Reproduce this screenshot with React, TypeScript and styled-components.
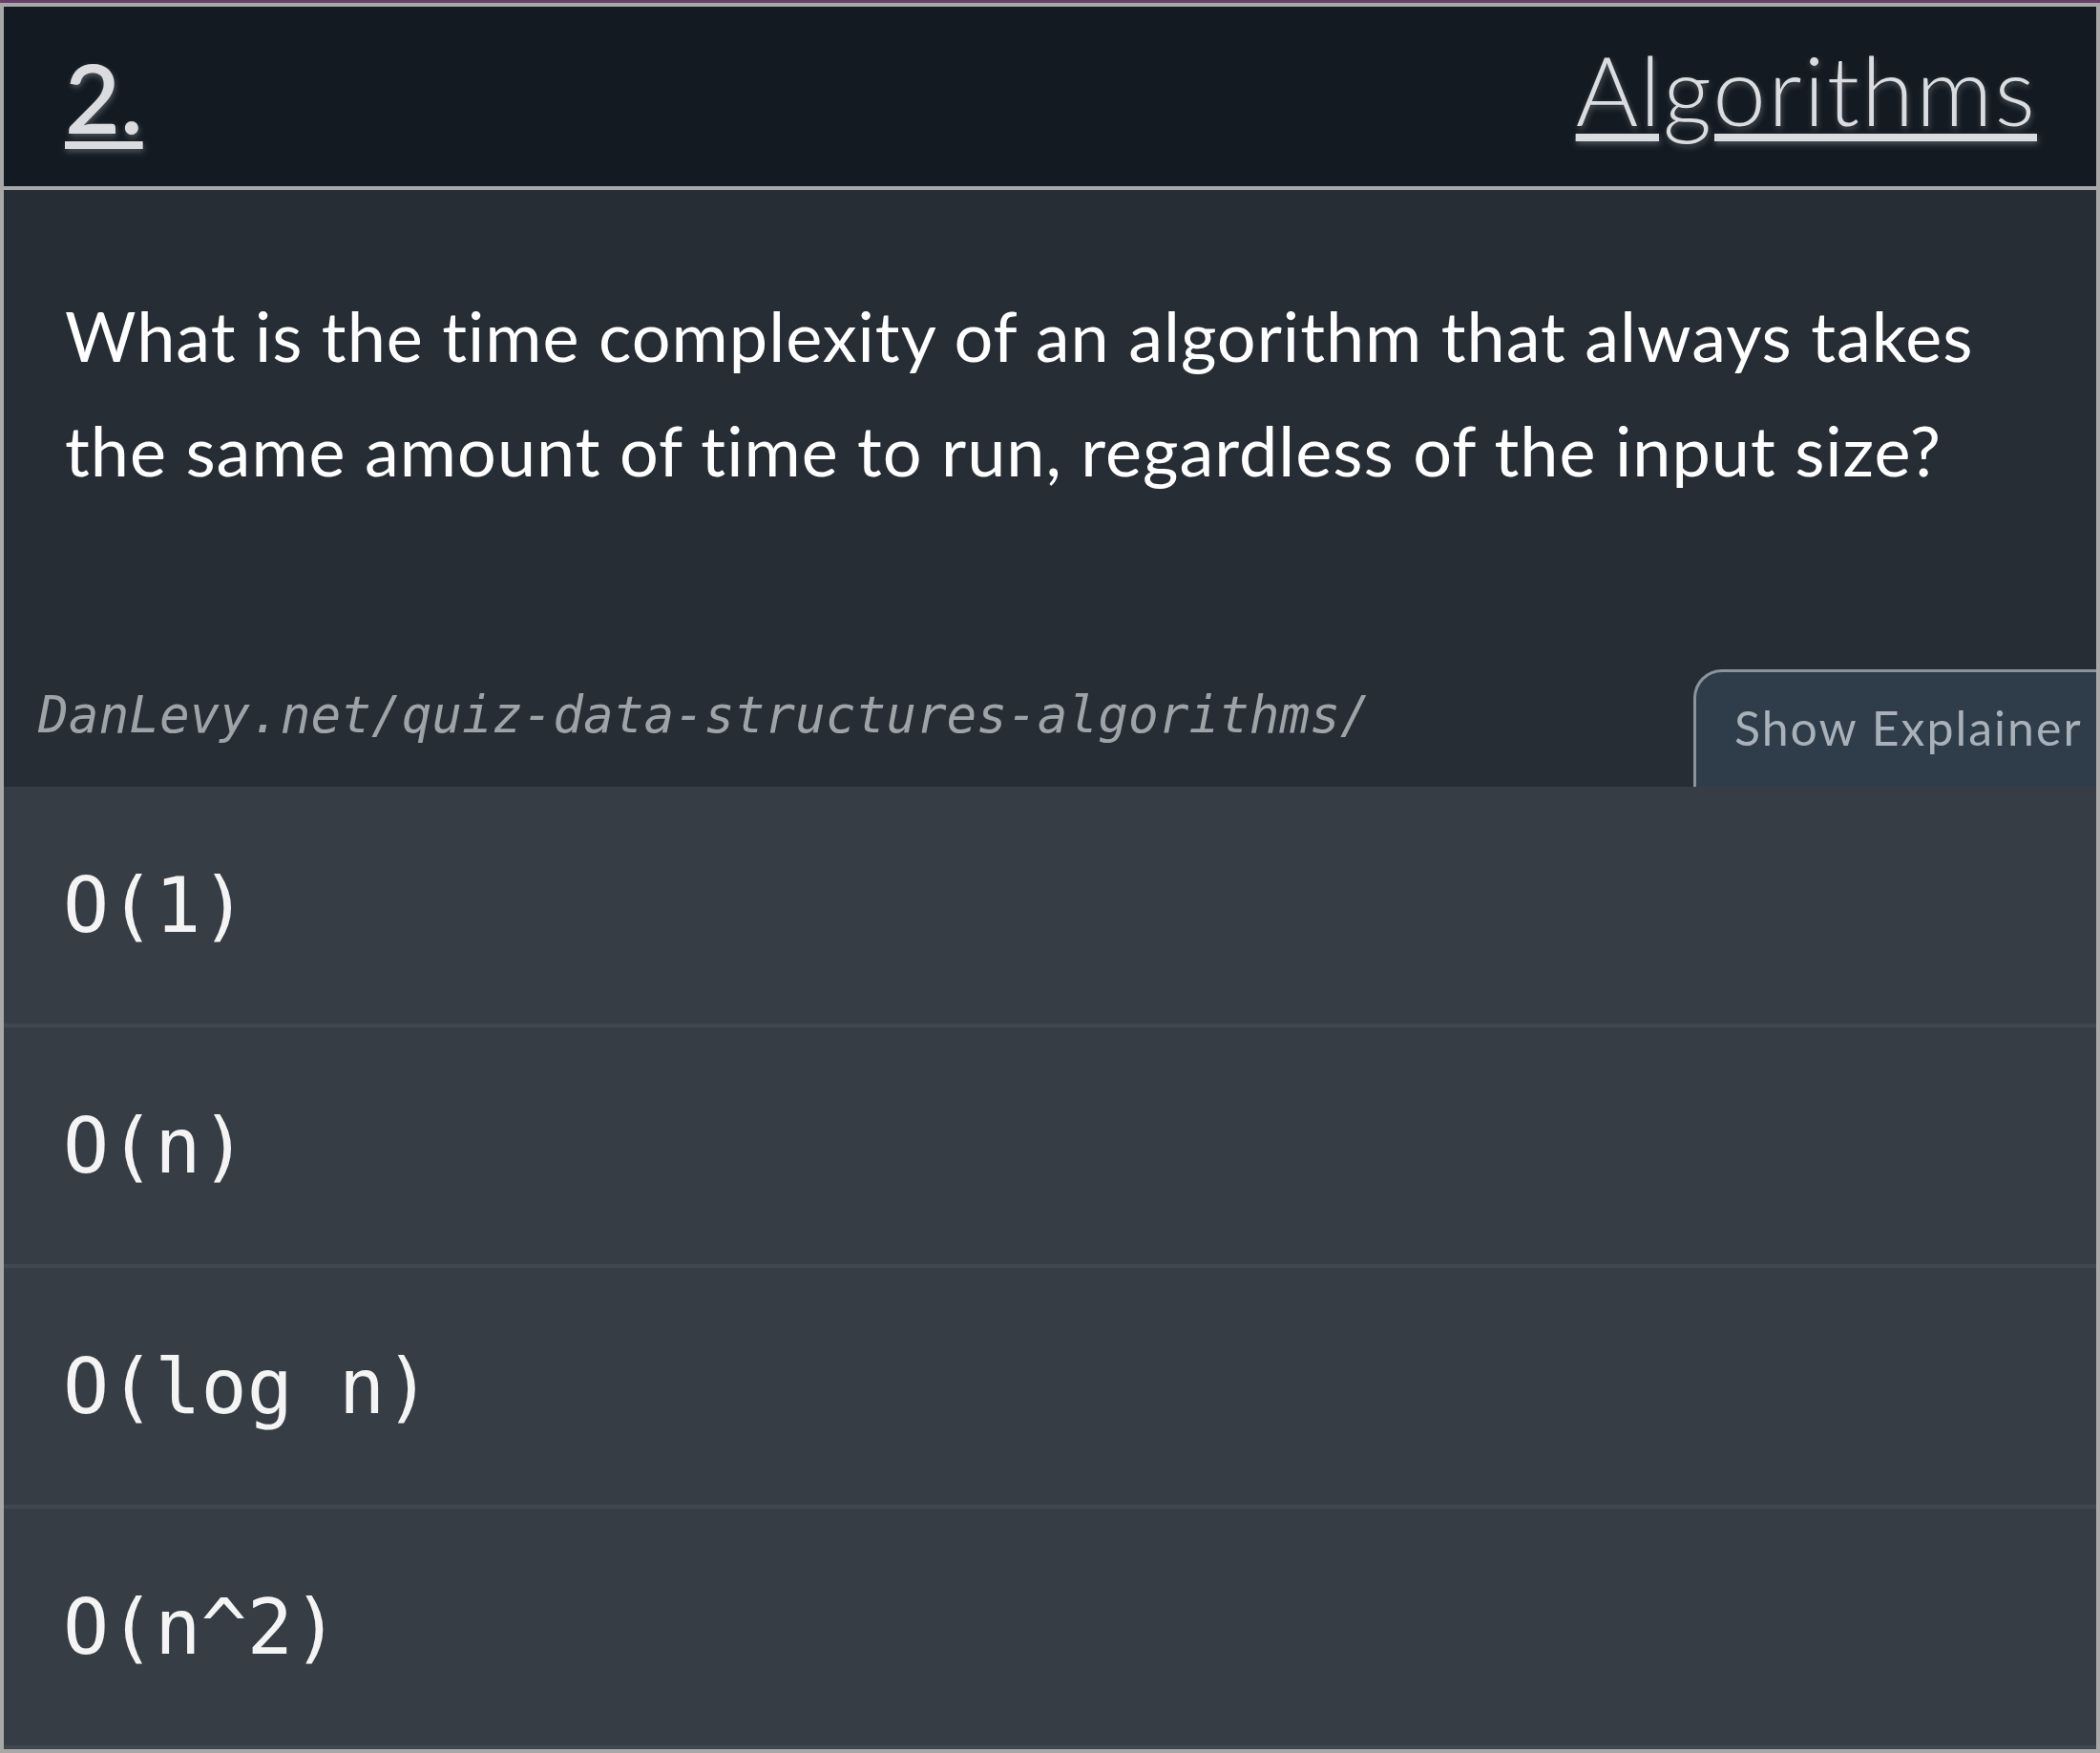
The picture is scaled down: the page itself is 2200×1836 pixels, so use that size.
import React from "react";
import styled, { createGlobalStyle } from "styled-components";

const GlobalStyle = createGlobalStyle`
  * { box-sizing: border-box; }
  html, body { margin: 0; padding: 0; }
  body {
    background: #6a3c68;
    padding-top: 3px;
    font-family: "Lato", "Open Sans", sans-serif;
  }
`;

const Card = styled.article`
  height: 1833px;
  border: 4px solid #a8a8a8;
  background: #272d34;
  display: flex;
  flex-direction: column;
  overflow: hidden;
`;

const Header = styled.header`
  flex: none;
  height: 192px;
  background: #131a21;
  border-bottom: 4px solid #a8a8a8;
  display: flex;
  align-items: center;
  justify-content: space-between;
  padding: 0 62px 0 64px;
`;

const HeaderLink = styled.a<{ $weight: number; $lift: number; $spacing: number }>`
  font-family: "Lato", "Open Sans", sans-serif;
  font-size: 100px;
  line-height: 1;
  font-weight: ${(p) => p.$weight};
  letter-spacing: ${(p) => p.$spacing}px;
  color: #dadcdf;
  text-decoration: underline;
  text-decoration-thickness: 8px;
  text-underline-offset: 8px;
  text-shadow: 1px 3px 6px rgba(190, 195, 200, 0.35);
  padding-bottom: ${(p) => p.$lift}px;
  cursor: pointer;
`;

const Body = styled.section`
  flex: none;
  height: 625px;
  display: flex;
  flex-direction: column;
`;

const Question = styled.p`
  flex: 1;
  margin: 0;
  padding: 92px 80px 0 64px;
  font-family: "Lato", "Open Sans", sans-serif;
  font-size: 72px;
  line-height: 120px;
  letter-spacing: 1px;
  font-weight: 400;
  color: #ffffff;
`;

const Footer = styled.div`
  flex: none;
  height: 123px;
  display: flex;
  align-items: center;
  justify-content: space-between;
  padding-left: 36px;
`;

const SourceLink = styled.span`
  font-family: "DejaVu Sans Mono", "Liberation Mono", monospace;
  font-style: italic;
  font-size: 52.7px;
  color: #9ea3a8;
  padding-bottom: 28px;
`;

const ExplainerButton = styled.button`
  align-self: stretch;
  width: 422px;
  margin: 0;
  padding: 0 0 4px 40px;
  border: none;
  border-top: 3px solid #8c939a;
  border-left: 3px solid #8c939a;
  border-top-left-radius: 30px;
  background: #2f3d4b;
  color: #a9b0b8;
  font-family: "Lato", "Open Sans", sans-serif;
  font-size: 50px;
  letter-spacing: 2px;
  text-align: left;
  white-space: nowrap;
  cursor: pointer;
`;

const AnswerList = styled.ol`
  flex: none;
  margin: 0;
  padding: 0;
  list-style: none;
`;

const Answer = styled.li`
  height: 252px;
  border-bottom: 4px solid #40474f;
  background: #373d45;
  display: flex;
  align-items: center;
  padding-left: 62px;
  font-family: "DejaVu Sans Mono", "Liberation Mono", monospace;
  font-size: 80px;
  color: #f4f4f4;
  cursor: pointer;
`;

const answers = ["O(1)", "O(n)", "O(log n)", "O(n^2)"];

export default function App() {
  return (
    <>
      <GlobalStyle />
      <Card>
        <Header>
          <HeaderLink $weight={600} $lift={0} $spacing={0}>2.</HeaderLink>
          <HeaderLink $weight={300} $lift={16} $spacing={2}>Algorithms</HeaderLink>
        </Header>
        <Body>
          <Question>
            What is the time complexity of an algorithm that always takes the same amount of time to run, regardless of the input size?
          </Question>
          <Footer>
            <SourceLink>DanLevy.net/quiz-data-structures-algorithms/</SourceLink>
            <ExplainerButton>Show Explainer</ExplainerButton>
          </Footer>
        </Body>
        <AnswerList>
          {answers.map((a) => (
            <Answer key={a}>{a}</Answer>
          ))}
        </AnswerList>
      </Card>
    </>
  );
}
